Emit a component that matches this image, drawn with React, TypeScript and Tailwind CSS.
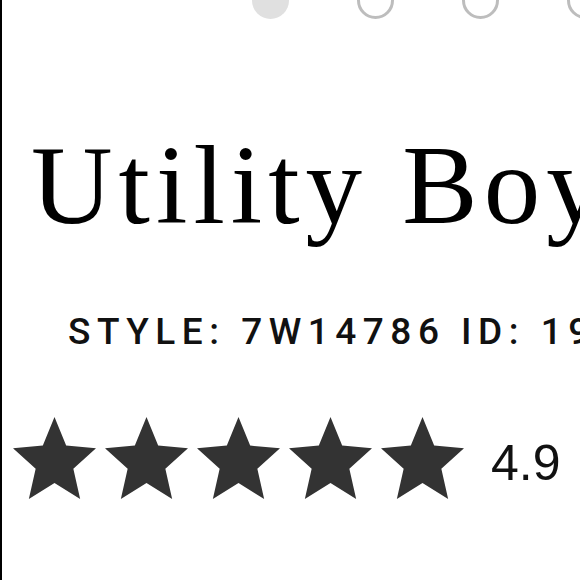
import React from 'react';

function Star() {
  return (
    <svg className="w-[83px] h-[82px] shrink-0" viewBox="2 2 20 19" preserveAspectRatio="none">
      <path
        d="M12 17.27L18.18 21l-1.64-7.03L22 9.24l-7.19-.61L12 2 9.19 8.63 2 9.24l5.46 4.73L5.82 21z"
        fill="#333333"
      />
    </svg>
  );
}

export default function App() {
  return (
    <div className="w-[580px] h-[580px] bg-white border-l-2 border-black overflow-hidden flex flex-col">
      {/* carousel dots */}
      <div className="flex gap-[68px] pl-[250px] -mt-[18px] shrink-0">
        <span className="w-[37px] h-[37px] rounded-full bg-[#e0e0e0] shrink-0" />
        {[0, 1, 2].map((i) => (
          <span key={i} className="w-[37px] h-[37px] rounded-full border-[3px] border-[#bdbdbd] shrink-0" />
        ))}
      </div>

      <h1 className="mt-[109px] pl-[29px] whitespace-nowrap text-[113px] leading-[113px] tracking-[6px] text-black font-['Liberation_Serif',serif]">
        Utility Boyfriend Jean
      </h1>

      <p className="mt-[72px] pl-[66px] whitespace-nowrap text-[37px] leading-[37px] tracking-[6.5px] font-medium text-[#111] font-['Roboto',sans-serif]">
        STYLE: 7W14786 ID: 1957420
      </p>

      <div className="mt-[67px] pl-[11px] flex items-start shrink-0">
        <div className="flex gap-[9px]">
          {[0, 1, 2, 3, 4].map((i) => (
            <Star key={i} />
          ))}
        </div>
        <span className="ml-[27px] mt-[21px] text-[50px] leading-[50px] text-[#111] font-['Liberation_Sans',sans-serif]">
          4.9
        </span>
      </div>
    </div>
  );
}
